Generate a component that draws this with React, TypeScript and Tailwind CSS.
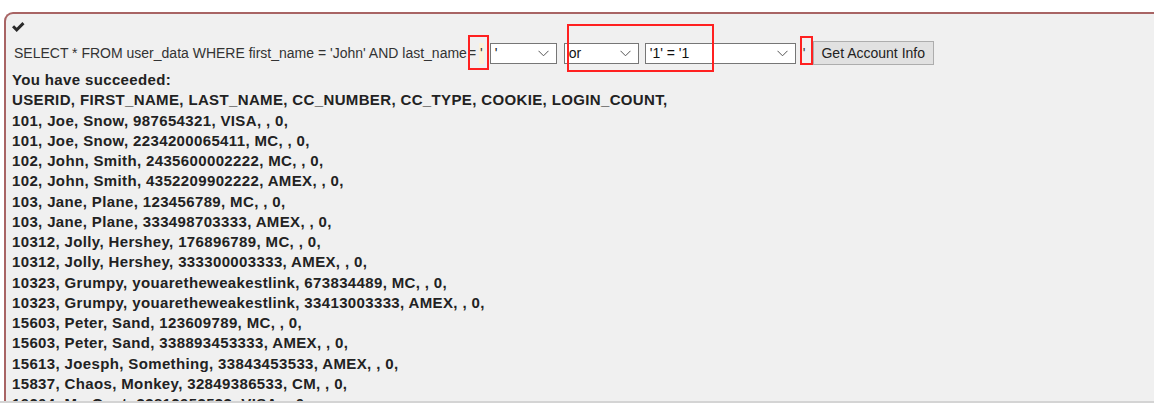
const rows = [
  "USERID, FIRST_NAME, LAST_NAME, CC_NUMBER, CC_TYPE, COOKIE, LOGIN_COUNT,",
  "101, Joe, Snow, 987654321, VISA, , 0,",
  "101, Joe, Snow, 2234200065411, MC, , 0,",
  "102, John, Smith, 2435600002222, MC, , 0,",
  "102, John, Smith, 4352209902222, AMEX, , 0,",
  "103, Jane, Plane, 123456789, MC, , 0,",
  "103, Jane, Plane, 333498703333, AMEX, , 0,",
  "10312, Jolly, Hershey, 176896789, MC, , 0,",
  "10312, Jolly, Hershey, 333300003333, AMEX, , 0,",
  "10323, Grumpy, youaretheweakestlink, 673834489, MC, , 0,",
  "10323, Grumpy, youaretheweakestlink, 33413003333, AMEX, , 0,",
  "15603, Peter, Sand, 123609789, MC, , 0,",
  "15603, Peter, Sand, 338893453333, AMEX, , 0,",
  "15613, Joesph, Something, 33843453533, AMEX, , 0,",
  "15837, Chaos, Monkey, 32849386533, CM, , 0,",
  "19204, Mr, Goat, 33812953533, VISA, , 0,",
]

function Chevron() {
  return (
    <svg width="11" height="7" viewBox="0 0 11 7" className="ml-auto shrink-0">
      <path d="M0.5 0.8 L5.5 5.8 L10.5 0.8" fill="none" stroke="#555" strokeWidth="1" />
    </svg>
  )
}

function FakeSelect({ value, className }: { value: string; className: string }) {
  return (
    <div className={`flex items-center h-[21px] bg-white border border-[#767676] pl-[4px] pr-[7px] text-[14px] text-[#111] ${className}`}>
      <span>{value}</span>
      <Chevron />
    </div>
  )
}

export default function App() {
  return (
    <div className="relative w-[1154px] h-[403px] overflow-hidden bg-white font-['Liberation_Sans',Arial,sans-serif]">
      <div className="mt-[12px] ml-[4px] w-[1170px] h-[400px] bg-[#f0f0f0] border-t-2 border-l-2 border-[#a86464] rounded-tl-[9px] text-[#333]">
        {/* check icon */}
        <div className="pt-[8px] pl-[6px] h-[27px]">
          <svg width="13" height="10" viewBox="0 0 13 10">
            <path d="M0 5.3 L2.1 3.2 L4.7 5.8 L10.4 0.1 L12.5 2.2 L4.7 10 Z" fill="#2a2a2a" />
          </svg>
        </div>

        {/* query row */}
        <div className="flex items-center h-[24px] text-[14px] text-[#333]">
          <span className="ml-[8px] whitespace-nowrap">SELECT * FROM user_data WHERE first_name = 'John' AND last_name</span>
          <span className="ml-[1px]">=</span>
          <span className="ml-[3px] px-[1px] bg-[#fcf2d9] leading-[21px]">'</span>
          <FakeSelect value="'" className="ml-[6px] w-[67px]" />
          <FakeSelect value="or" className="ml-[7px] w-[75px]" />
          <FakeSelect value="'1' = '1" className="ml-[6px] w-[151px]" />
          <span className="ml-[7px] w-[8px]">'</span>
          <button className="ml-[2px] h-[24px] w-[121px] bg-[#e1e1e1] border border-[#adadad] text-[14px] text-[#222]">
            Get Account Info
          </button>
        </div>

        {/* results */}
        <div className="mt-[5px] pl-[6px] text-[15px] font-bold tracking-[0.36px] leading-[20.27px] text-[#222] whitespace-nowrap">
          <div>You have succeeded:</div>
          {rows.map((r, i) => (
            <div key={i}>{r}</div>
          ))}
        </div>
      </div>

      {/* bottom scrollbar edge */}
      <div className="absolute left-0 right-0 bottom-0 h-[2px] bg-[#d4d4d4]" />

      {/* red annotation boxes */}
      <div className="absolute left-[468px] top-[35px] w-[21px] h-[35px] border-2 border-[#ff2020]" />
      <div className="absolute left-[567px] top-[24px] w-[147px] h-[48px] border-2 border-[#ff2020]" />
      <div className="absolute left-[800px] top-[36px] w-[13px] h-[29px] border-2 border-[#ff2020]" />
    </div>
  )
}
